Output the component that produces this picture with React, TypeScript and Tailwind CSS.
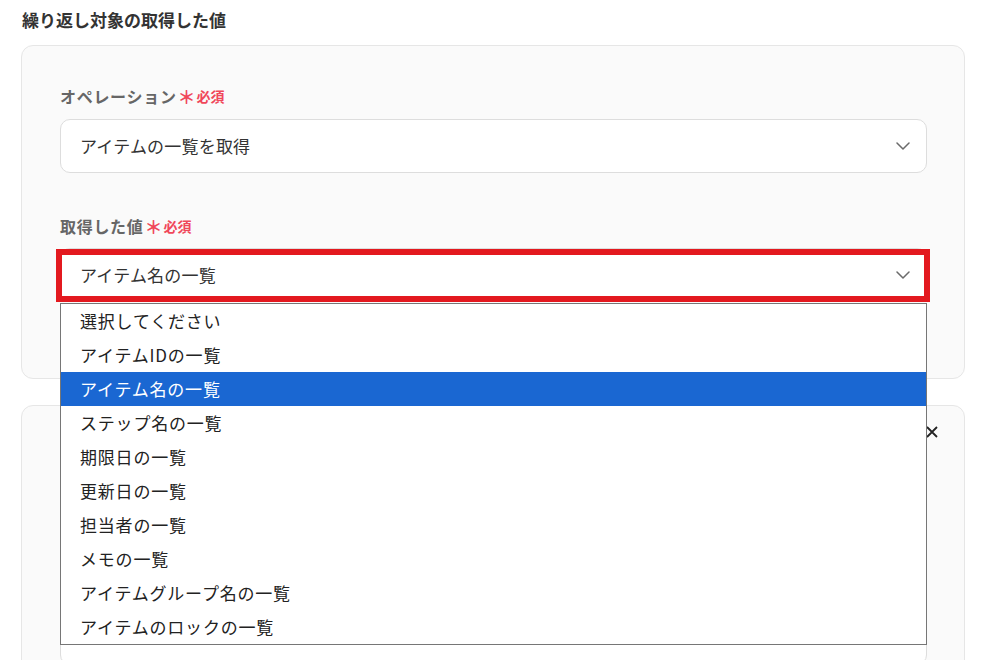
import React from "react";

const items = [
  "選択してください",
  "アイテムIDの一覧",
  "アイテム名の一覧",
  "ステップ名の一覧",
  "期限日の一覧",
  "更新日の一覧",
  "担当者の一覧",
  "メモの一覧",
  "アイテムグループ名の一覧",
  "アイテムのロックの一覧",
];

function Chevron() {
  return (
    <svg width="14" height="8" viewBox="0 0 14 8" fill="none">
      <path d="M1 1l6 6 6-6" stroke="#6b6b6b" strokeWidth="1.5" strokeLinecap="round" strokeLinejoin="round" />
    </svg>
  );
}

function Label({ text }: { text: string }) {
  return (
    <div className="flex h-[24px] items-center">
      <span className="text-[16px] font-bold tracking-[0.7px] text-[#666666]">{text}</span>
      <span className="ml-[1px] text-[18px] font-bold leading-none text-[#f0475a]">＊</span>
      <span className="ml-[1px] text-[14px] font-bold text-[#f0475a]">必須</span>
    </div>
  );
}

export default function App() {
  return (
    <div
      className="relative h-[660px] w-[991px] overflow-hidden bg-white"
      style={{ fontFamily: '"Noto Sans CJK JP", "Noto Sans", sans-serif' }}
    >
      <div className="pl-[22px] pt-[9px] text-[17px] font-bold leading-[22px] text-[#333333]">
        繰り返し対象の取得した値
      </div>

      <div className="ml-[21px] mt-[14px] h-[334px] w-[944px] rounded-[12px] border border-[#e6e6e6] bg-[#fafafa] pl-[38px] pr-[37px] pt-[38px]">
        <Label text="オペレーション" />
        <div className="mt-[11px] flex h-[54px] items-center justify-between rounded-[10px] border border-[#dddddd] bg-white pl-[19px] pr-[16px]">
          <span className="text-[17px] tracking-[0.2px] text-[#333333]">アイテムの一覧を取得</span>
          <Chevron />
        </div>

        <div className="mt-[41px]">
          <Label text="取得した値" />
        </div>
        <div className="relative mt-[10px]">
          <div className="flex h-[54px] items-center justify-between rounded-[10px] border border-[#dddddd] bg-white pl-[19px] pr-[16px]">
            <span className="text-[17px] tracking-[0.2px] text-[#333333]">アイテム名の一覧</span>
            <Chevron />
          </div>
          <div className="pointer-events-none absolute -left-[4px] -right-[3px] top-[1px] h-[53px] border-[6px] border-[#e3191f]" />
          <div className="absolute left-0 right-0 top-[55px] z-10 border border-[#767676] bg-white">
            {items.map((it, i) => (
              <div
                key={it}
                className={
                  i === 2
                    ? "flex h-[34px] items-center bg-[#1a67d2] pl-[19px] text-[17px] tracking-[0.8px] text-white"
                    : "flex h-[34px] items-center pl-[19px] text-[17px] tracking-[0.8px] text-[#222222]"
                }
              >
                {it}
              </div>
            ))}
          </div>
        </div>
      </div>

      <div className="ml-[21px] mt-[26px] h-[300px] w-[944px] rounded-[12px] border border-[#e6e6e6] bg-[#fafafa] pl-[38px] pr-[37px]">
        <div className="flex justify-end pt-[20px]">
          <svg width="12" height="12" viewBox="0 0 12 12" className="mr-[-11px]">
            <path d="M1 1l10 10M11 1L1 11" stroke="#222" strokeWidth="1.8" />
          </svg>
        </div>
        <div className="mt-[123px] h-[104px] rounded-[10px] border border-[#dddddd] bg-white" />
      </div>
    </div>
  );
}
